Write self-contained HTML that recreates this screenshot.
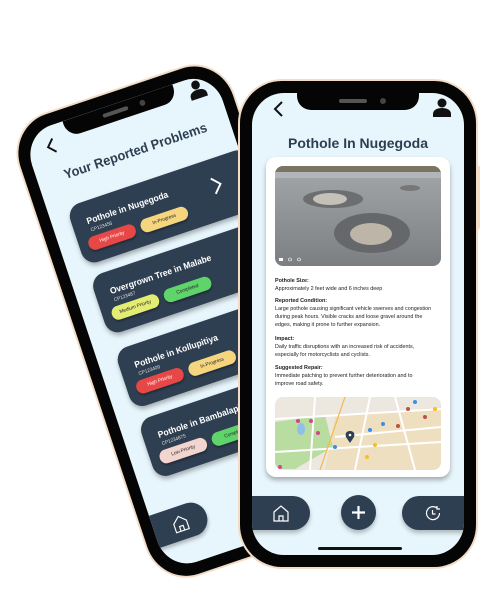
<!DOCTYPE html>
<html><head><meta charset="utf-8"><style>
*{margin:0;padding:0;box-sizing:border-box}
body{width:491px;height:614px;background:#fff;position:relative;overflow:hidden;font-family:"Liberation Sans",sans-serif}
.phone{position:absolute;width:240px;height:490px;border-radius:44px;background:#f3dcc6;padding:2px}
.blk{width:100%;height:100%;border-radius:42px;background:#050505;padding:12px 12px 12px 12px;position:relative}
.scr{width:100%;height:100%;border-radius:32px;background:#e7f5fc;position:relative;overflow:hidden}
.notch{position:absolute;left:45px;top:0;width:122px;height:17px;background:#050505;border-radius:0 0 14px 14px}
.notch:before{content:"";position:absolute;left:42px;top:6px;width:28px;height:4px;border-radius:2px;background:#555}
.notch:after{content:"";position:absolute;left:83px;top:5px;width:6px;height:6px;border-radius:3px;background:#444}
.title{position:absolute;left:0;right:0;top:42px;text-align:center;font-weight:bold;font-size:14px;color:#2e3e51}
.navl{position:absolute;left:0;top:403px;width:58px;height:34px;background:#2f3f52;border-radius:0 17px 17px 0;box-shadow:0 3px 4px rgba(0,0,0,.25)}
.navr{position:absolute;right:0;top:403px;width:62px;height:34px;background:#2f3f52;border-radius:17px 0 0 17px;box-shadow:0 3px 4px rgba(0,0,0,.25)}
.navc{position:absolute;left:89px;top:402px;width:35px;height:35px;background:#2f3f52;border-radius:50%;box-shadow:0 3px 4px rgba(0,0,0,.25)}
.card{position:absolute;background:#fff;border-radius:10px;box-shadow:0 3px 5px rgba(0,0,0,.3)}
.t{position:absolute;left:9px;font-size:5.4px;color:#222;line-height:8px;white-space:nowrap}
.t b{font-weight:bold}
.pc{position:absolute;left:20px;width:200px;height:62px;background:#2f3f52;border-radius:14px;box-shadow:0 3px 5px rgba(0,0,0,.3);color:#fff}
.pc h3{position:absolute;left:16px;top:15px;font-size:9px;font-weight:bold}
.pc .c{position:absolute;left:17px;top:27px;font-size:5px;color:#ddd}
.bd{position:absolute;top:36px;height:14px;border-radius:7px;font-size:5px;text-align:center;line-height:14px;width:52px;color:#222;box-shadow:0 2px 2px rgba(0,0,0,.3)}
</style></head><body>

<!-- left phone -->
<div class="phone" style="left:5px;top:126px;transform-origin:0 0;transform:matrix(0.90,-0.303,0.315,0.945,0,0)">
<div class="blk"><div class="scr">
<div class="notch"></div>
<svg style="position:absolute;left:20px;top:12px" width="12" height="16" viewBox="0 0 12 16"><path d="M9 1L2 8l7 7" stroke="#111" stroke-width="2" fill="none"/></svg>
<svg style="position:absolute;left:180px;top:2px" width="20" height="20" viewBox="0 0 20 20"><circle cx="10" cy="6" r="4.5" fill="#111"/><path d="M1 20v-3c0-4 4-6 9-6s9 2 9 6v3z" fill="#111"/></svg>
<div class="title" style="font-size:13.5px;top:44px;left:4px">Your Reported Problems</div>
<div class="pc" style="top:83px"><h3>Pothole in Nugegoda</h3><div class="c">CP123456</div>
<div class="bd" style="left:10px;background:#e84747;color:#fff">High Priority</div><div class="bd" style="left:68px;background:#f6d57f">In-Progress</div>
<svg style="position:absolute;left:152px;top:18px" width="12" height="18" viewBox="0 0 12 18"><path d="M2 1l8 8-8 8" stroke="#fff" stroke-width="2" fill="none"/></svg></div>
<div class="pc" style="top:157px"><h3>Overgrown Tree in Malabe</h3><div class="c">CP123487</div>
<div class="bd" style="left:10px;background:#e3ec73">Medium Priority</div><div class="bd" style="left:68px;background:#5fd46a">Completed</div></div>
<div class="pc" style="top:235px"><h3>Pothole in Kollupitiya</h3><div class="c">CP123409</div>
<div class="bd" style="left:10px;background:#e84747;color:#fff">High Priority</div><div class="bd" style="left:68px;background:#f6d57f">In-Progress</div></div>
<div class="pc" style="top:309px"><h3>Pothole in Bambalapitiya</h3><div class="c">CP1234875</div>
<div class="bd" style="left:10px;background:#f2d5cf">Low Priority</div><div class="bd" style="left:68px;background:#5fd46a">Completed</div></div>
<div class="navl"><svg style="position:absolute;left:20px;top:8px" width="18" height="18" viewBox="0 0 18 18"><path d="M2 8L9 2l7 6v9H2z M7 17v-5h4v5" stroke="#fff" stroke-width="1.2" fill="none"/></svg></div>
</div></div></div>

<!-- right phone side button -->
<div style="position:absolute;left:474px;top:165px;width:6px;height:65px;background:#f3dcc6;border-radius:3px"></div>

<!-- right phone -->
<div class="phone" style="left:238px;top:79px">
<div class="blk"><div class="scr">
<div class="notch"></div>
<svg style="position:absolute;left:21px;top:8px" width="12" height="16" viewBox="0 0 12 16"><path d="M9 1L2 8l7 7" stroke="#111" stroke-width="2" fill="none"/></svg>
<svg style="position:absolute;left:180px;top:4px" width="20" height="20" viewBox="0 0 20 20"><circle cx="10" cy="6" r="4.5" fill="#111"/><path d="M1 20v-3c0-4 4-6 9-6s9 2 9 6v3z" fill="#111"/></svg>
<div class="title">Pothole In Nugegoda</div>
<div class="card" style="left:14px;top:64px;width:184px;height:320px">
<svg style="position:absolute;left:9px;top:9px;border-radius:8px" width="166" height="100" viewBox="0 0 166 100">
<defs><linearGradient id="g" x1="0" y1="0" x2="0" y2="1"><stop offset="0" stop-color="#a4a7aa"/><stop offset="1" stop-color="#7c7f82"/></linearGradient></defs>
<rect width="166" height="100" fill="url(#g)"/><rect width="166" height="6" fill="#7a7560"/><rect y="6" width="166" height="6" fill="#b3b6b8"/>
<ellipse cx="58" cy="33" rx="30" ry="9" fill="#6c6e70"/><ellipse cx="55" cy="33" rx="17" ry="6" fill="#c4c1b8"/>
<ellipse cx="97" cy="67" rx="38" ry="20" fill="#66676a"/><ellipse cx="96" cy="68" rx="21" ry="11" fill="#bdb6a8"/>
<ellipse cx="135" cy="22" rx="10" ry="3" fill="#777"/>
<rect x="4" y="92" width="4" height="3" fill="#fff"/><circle cx="15" cy="93.5" r="1.5" fill="none" stroke="#fff" stroke-width=".6"/><circle cx="24" cy="93.5" r="1.5" fill="none" stroke="#fff" stroke-width=".6"/>
</svg>
<div class="t" style="top:120px"><b>Pothole Size:</b><br>Approximately 2 feet wide and 6 inches deep</div>
<div class="t" style="top:140px"><b>Reported Condition:</b><br>Large pothole causing significant vehicle swerves and congestion<br>during peak hours. Visible cracks and loose gravel around the<br>edges, making it prone to further expansion.</div>
<div class="t" style="top:178px"><b>Impact:</b><br>Daily traffic disruptions with an increased risk of accidents,<br>especially for motorcyclists and cyclists.</div>
<div class="t" style="top:207px"><b>Suggested Repair:</b><br>Immediate patching to prevent further deterioration and to<br>improve road safety.</div>
<svg style="position:absolute;left:9px;top:240px;border-radius:8px" width="166" height="73" viewBox="0 0 166 73">
<rect width="166" height="73" fill="#ece8e0"/>
<path d="M60 20L166 10V73H50z" fill="#efdcb8" opacity=".8"/>
<path d="M0 25L50 18 58 50 20 72H0z" fill="#b9dca0"/>
<ellipse cx="26" cy="32" rx="4" ry="6" fill="#8fc0e8"/>
<path d="M0 22L166 12M40 0L35 73M95 0L80 73M60 40L166 30M0 55L166 45M120 0L140 73" stroke="#fff" stroke-width="2" fill="none"/>
<path d="M70 0L45 73" stroke="#f5b94a" stroke-width="1.2"/>
<g fill="#3a8ee6"><circle cx="95" cy="33" r="2"/><circle cx="60" cy="50" r="2"/><circle cx="140" cy="5" r="2"/><circle cx="108" cy="27" r="2"/></g>
<g fill="#f6c02b"><circle cx="75" cy="40" r="2"/><circle cx="92" cy="60" r="2"/><circle cx="160" cy="12" r="2"/><circle cx="100" cy="48" r="2"/></g>
<g fill="#d6448c"><circle cx="23" cy="24" r="2"/><circle cx="36" cy="24" r="2"/><circle cx="43" cy="36" r="2"/><circle cx="5" cy="70" r="2"/></g>
<g fill="#c0503f"><circle cx="133" cy="12" r="2"/><circle cx="150" cy="20" r="2"/><circle cx="123" cy="29" r="2"/></g>
<path d="M75 34c-4 0-5 3-4 6l4 6 4-6c1-3 0-6-4-6z" fill="#2f3f52"/><circle cx="75" cy="38" r="1.3" fill="#fff"/>
</svg>
</div>
<div class="navl"><svg style="position:absolute;left:20px;top:8px" width="18" height="18" viewBox="0 0 18 18"><path d="M2 8L9 2l7 6v9H2z M7 17v-5h4v5" stroke="#fff" stroke-width="1.2" fill="none"/></svg></div>
<div class="navc"><svg style="position:absolute;left:9px;top:9px" width="17" height="17" viewBox="0 0 17 17"><path d="M8.5 2v13M2 8.5h13" stroke="#fff" stroke-width="2.2"/></svg></div>
<div class="navr"><svg style="position:absolute;left:22px;top:8px" width="18" height="18" viewBox="0 0 18 18"><path d="M15.5 9A6.5 6.5 0 1 1 13 4" stroke="#fff" stroke-width="1.2" fill="none"/><path d="M8.5 6v4h3M13 2v3h3" stroke="#fff" stroke-width="1.2" fill="none"/></svg></div>
<div style="position:absolute;left:66px;top:454px;width:84px;height:3px;border-radius:2px;background:#111"></div>
</div></div></div>
</body></html>
